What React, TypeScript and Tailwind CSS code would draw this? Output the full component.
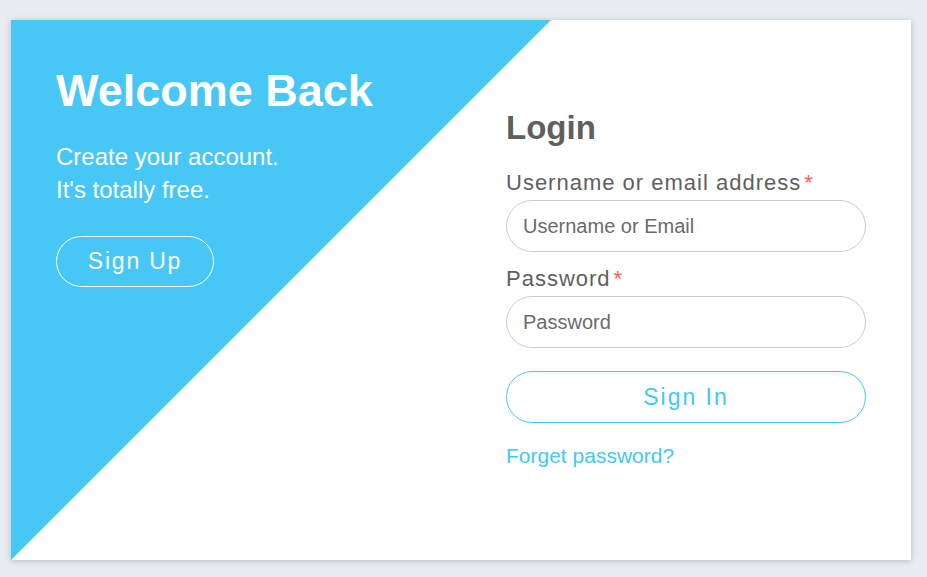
export default function App() {
  return (
    <div className="min-h-screen bg-[#e9edf1] pt-[20px] pl-[11px] font-['Liberation_Sans',Arial,sans-serif]">
      <div className="relative flex w-[900px] h-[540px] overflow-hidden bg-white shadow-[0_1px_6px_rgba(0,0,0,0.22)]">
        {/* diagonal blue backdrop */}
        <div className="absolute left-0 top-0 w-[540px] h-[540px] bg-[#46c7f5] [clip-path:polygon(0_0,100%_0,0_100%)]" />

        <div className="relative w-[450px] pl-[45px] pt-[44px] text-white">
          <h1 className="text-[45px] font-bold leading-[54px]">Welcome Back</h1>
          <p className="mt-[22px] text-[24px] leading-[33px]">
            Create your account.
            <br />
            It's totally free.
          </p>
          <button className="mt-[30px] w-[158px] h-[51px] rounded-full border border-white text-[23px] tracking-[1.8px]">
            Sign Up
          </button>
        </div>

        <div className="relative w-[450px] px-[45px] pt-[88px]">
          <h2 className="text-[33px] font-bold leading-[40px] text-[#5f5f5f]">Login</h2>
          <form className="mt-[21px] flex flex-col">
            <label className="text-[22px] leading-[28px] tracking-[1px] text-[#5f5f5f]">
              Username or email address<span className="ml-[3px] text-[#ff5a5a]">*</span>
            </label>
            <input
              type="text"
              placeholder="Username or Email"
              className="mt-[3px] h-[52px] w-full rounded-full border border-[#cccccc] px-[16px] text-[20px] placeholder:text-[#6b6b6b] outline-none"
            />
            <label className="mt-[13px] text-[22px] leading-[28px] tracking-[1px] text-[#5f5f5f]">
              Password<span className="ml-[3px] text-[#ff5a5a]">*</span>
            </label>
            <input
              type="password"
              placeholder="Password"
              className="mt-[3px] h-[52px] w-full rounded-full border border-[#cccccc] px-[16px] text-[20px] placeholder:text-[#6b6b6b] outline-none"
            />
            <button
              type="button"
              className="mt-[23px] h-[52px] w-full rounded-full border border-[#46c7f5] text-[23px] tracking-[2px] text-[#46c7f5]"
            >
              Sign In
            </button>
            <a href="#" className="mt-[20px] text-[21px] leading-[26px] text-[#46c7f5]">
              Forget password?
            </a>
          </form>
        </div>
      </div>
    </div>
  );
}
